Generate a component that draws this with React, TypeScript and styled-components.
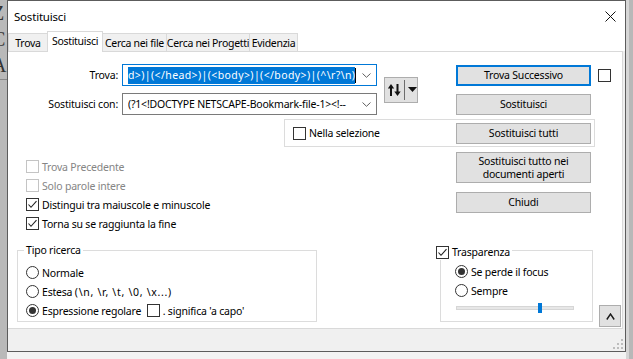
import React from "react";
import styled, { createGlobalStyle } from "styled-components";

const FONT = `"Noto Sans", "Liberation Sans", Arial, sans-serif`;

const Global = createGlobalStyle`
  html, body { margin: 0; padding: 0; background: #f2f2f2; }
  body { font-family: ${FONT}; font-size: 10.5px; letter-spacing: -0.2px; color: #000; }
  * { box-sizing: border-box; }
  button { font-family: ${FONT}; font-size: 10.5px; letter-spacing: -0.2px; color: #000; }
`;

const Screen = styled.div`
  width: 633px;
  height: 359px;
  overflow: hidden;
  display: grid;
  grid-template-columns: 7px 619px 7px;
  grid-template-rows: 352px 7px;
  background: #f3f3f3;
`;

const LeftStrip = styled.div`
  grid-column: 1;
  grid-row: 1 / 3;
  background: #b9b9b9;
  overflow: hidden;
  display: flex;
  flex-direction: column;
  font-family: "Liberation Serif", serif;
  font-size: 20px;
  line-height: 26px;
  color: #333;
`;

const Glyph = styled.span`
  margin-left: -8px;
  white-space: nowrap;
`;

const StripRule = styled.div`
  margin-top: 1px;
  height: 1px;
  background: #f4f4f4;
  border-bottom: 1px solid #888;
`;

const RightStrip = styled.div`
  grid-column: 3;
  grid-row: 1 / 3;
  background: linear-gradient(to right, #d6d6d6 0 3px, #b8b8b8 3px);
`;

const BottomStrip = styled.div`
  grid-column: 2;
  grid-row: 2;
  background: #f3f3f3;
`;

const Dialog = styled.div`
  grid-column: 2;
  grid-row: 1;
  border: 1px solid #5c5c5c;
  background: #fff;
  display: flex;
  flex-direction: column;
`;

const TitleBar = styled.div`
  height: 30px;
  flex: none;
  display: flex;
  align-items: center;
  justify-content: space-between;
  padding: 0 9px 0 6px;
  font-size: 11.5px;
`;

const Main = styled.div`
  display: flex;
  flex-direction: column;
  background: #f0f0f0;
`;

const TabRow = styled.div`
  height: 20px;
  display: flex;
  align-items: flex-end;
  background: #fff;
  position: relative;
  z-index: 1;
`;

const Tab = styled.div<{ $active?: boolean; $w: number }>`
  width: ${(p) => p.$w}px;
  height: ${(p) => (p.$active ? 21 : 18)}px;
  margin-right: -1px;
  margin-bottom: ${(p) => (p.$active ? -1 : 0)}px;
  padding-bottom: ${(p) => (p.$active ? 3 : 0)}px;
  background: ${(p) => (p.$active ? "#fff" : "#f0f0f0")};
  border: 1px solid #d9d9d9;
  border-bottom: none;
  display: flex;
  align-items: center;
  justify-content: center;
  white-space: nowrap;
  overflow: hidden;
  letter-spacing: -0.3px;
  position: relative;
  z-index: ${(p) => (p.$active ? 2 : 1)};
`;

const Panel = styled.div`
  width: 615px;
  height: 278px;
  background: #fff;
  border-top: 1px solid #d9d9d9;
  border-right: 1px solid #d9d9d9;
  border-bottom: 1px solid #d9d9d9;
  display: flex;
  flex-direction: column;
`;

const Footer = styled.div`
  height: 22px;
  background: #f0f0f0;
  display: flex;
  justify-content: flex-end;
  align-items: flex-end;
  padding: 0 2px 2px 0;
`;

const TopGrid = styled.div`
  margin-top: 12px;
  display: grid;
  grid-template-columns: 114px 255px 7px 34px 38px 135px 7px 13px;
  grid-template-rows: 22px 7px 22px 4px 28px;
`;

const FieldLabel = styled.label<{ $row: number }>`
  grid-column: 1;
  grid-row: ${(p) => p.$row};
  align-self: center;
  text-align: right;
  padding-right: 4px;
  white-space: nowrap;
`;

const Combo = styled.div<{ $row: number; $focus?: boolean }>`
  grid-column: 2;
  grid-row: ${(p) => p.$row};
  height: 22px;
  border: 1px solid ${(p) => (p.$focus ? "#0078d7" : "#7a7a7a")};
  display: flex;
  align-items: center;
  padding: 0 5px;
  gap: 4px;
  background: #fff;
`;

const ComboText = styled.div`
  flex: 1;
  overflow: hidden;
  white-space: nowrap;
  display: flex;
  align-items: center;
`;

const Selected = styled.span`
  background: #0078d7;
  color: #fff;
  line-height: 17px;
  letter-spacing: 0.4px;
`;

const Caret = styled.span`
  width: 1px;
  height: 15px;
  background: #000;
`;

const Escapes = styled.span`
  letter-spacing: 0.7px;
`;

const SwapButton = styled.button`
  grid-column: 4;
  grid-row: 1 / 4;
  align-self: center;
  height: 26px;
  padding: 0 0 0 3px;
  background: #e1e1e1;
  border: 1px solid #adadad;
  display: flex;
  align-items: center;
  gap: 3px;
`;

const SwapSep = styled.span`
  width: 1px;
  height: 20px;
  background: #6d6d6d;
`;

const Button = styled.button<{ $default?: boolean; $tall?: boolean }>`
  width: 135px;
  height: ${(p) => (p.$tall ? 31 : 21)}px;
  padding: 0;
  background: #e1e1e1;
  border: ${(p) => (p.$default ? "2px solid #0078d7" : "1px solid #adadad")};
  line-height: 13px;
  text-align: center;
`;

const GridButton = styled(Button)<{ $row: string }>`
  grid-column: 6;
  grid-row: ${(p) => p.$row};
  align-self: end;
`;

const GridCheck = styled.span`
  grid-column: 8;
  grid-row: 1;
  align-self: center;
  display: flex;
`;

const SelectionBox = styled.div`
  grid-column: 2 / 9;
  grid-row: 5;
  margin-left: 162px;
  width: 311px;
  border: 1px solid #dcdcdc;
  display: flex;
  align-items: center;
  justify-content: space-between;
  padding: 0 3px 0 8px;
`;

const Middle = styled.div`
  height: 90px;
  display: flex;
  justify-content: space-between;
  align-items: flex-start;
`;

const CheckList = styled.div`
  margin: 10px 0 0 18px;
  display: flex;
  flex-direction: column;
`;

const ButtonCol = styled.div`
  margin: 5px 31px 0 0;
  display: flex;
  flex-direction: column;
  gap: 9px;
`;

const Item = styled.label<{ $disabled?: boolean }>`
  height: 19px;
  display: flex;
  align-items: center;
  gap: 3px;
  white-space: nowrap;
  color: ${(p) => (p.$disabled ? "#858585" : "#000")};
`;

const Box = styled.span<{ $disabled?: boolean }>`
  width: 13px;
  height: 13px;
  flex: none;
  border: 1px solid ${(p) => (p.$disabled ? "#c4c4c4" : "#333")};
  background: #fff;
  display: inline-flex;
  align-items: center;
  justify-content: center;
`;

const RadioCircle = styled.span<{ $on?: boolean }>`
  width: 13px;
  height: 13px;
  flex: none;
  border: 1px solid #333;
  border-radius: 50%;
  background: #fff;
  display: inline-flex;
  align-items: center;
  justify-content: center;
  &::after {
    content: "";
    width: 7px;
    height: 7px;
    border-radius: 50%;
    background: ${(p) => (p.$on ? "#333" : "transparent")};
  }
`;

const Bottom = styled.div`
  margin-top: 13px;
  padding-left: 9px;
  display: flex;
  align-items: flex-start;
`;

const GroupBox = styled.div<{ $w: number; $ml?: number; $pad: string }>`
  position: relative;
  width: ${(p) => p.$w}px;
  height: 72px;
  margin-left: ${(p) => p.$ml ?? 0}px;
  border: 1px solid #dcdcdc;
  padding: ${(p) => p.$pad};
  display: flex;
  flex-direction: column;
`;

const Caption = styled.div<{ $left: number; $top: number }>`
  position: absolute;
  left: ${(p) => p.$left}px;
  top: ${(p) => p.$top}px;
  background: #fff;
  padding: 0 2px;
  line-height: 15px;
  display: flex;
  align-items: center;
  gap: 3px;
  white-space: nowrap;
`;

const Slider = styled.div`
  position: relative;
  margin: 3px 0 0 1px;
  width: 118px;
  height: 10px;
`;

const Track = styled.div`
  margin-top: 3px;
  height: 4px;
  background: #e7e7e7;
  border: 1px solid #d6d6d6;
`;

const Thumb = styled.div<{ $left: number }>`
  position: absolute;
  top: 0;
  left: ${(p) => p.$left}px;
  width: 4px;
  height: 10px;
  background: #0078d7;
`;

const CornerButton = styled.button`
  width: 22px;
  height: 22px;
  margin: 55px 0 0 6px;
  padding: 0;
  background: #e1e1e1;
  border: 1px solid #adadad;
  display: flex;
  align-items: center;
  justify-content: center;
`;

const CheckMark = () => (
  <svg width="11" height="11" viewBox="0 0 11 11">
    <polyline points="1.5,5.5 4,8.3 9.5,2.2" fill="none" stroke="#222" strokeWidth="1.1" />
  </svg>
);

const Check = ({ on, disabled }: { on?: boolean; disabled?: boolean }) => (
  <Box $disabled={disabled}>{on && <CheckMark />}</Box>
);

const Chevron = () => (
  <svg width="9" height="5" viewBox="0 0 9 5">
    <polyline points="0.5,0.5 4.5,4.3 8.5,0.5" fill="none" stroke="#606060" strokeWidth="1" />
  </svg>
);

const CloseIcon = () => (
  <svg width="11" height="11" viewBox="0 0 11 11">
    <path d="M0.5 0.5 L10.5 10.5 M10.5 0.5 L0.5 10.5" stroke="#111" strokeWidth="1" />
  </svg>
);

const SwapIcon = () => (
  <svg width="13" height="12" viewBox="0 0 13 12">
    <rect x="2" y="3" width="2" height="9" fill="#111" />
    <polygon points="-0.2,4.5 3,0 6.2,4.5" fill="#111" />
    <rect x="8.5" y="0" width="2" height="9" fill="#111" />
    <polygon points="6.3,7.5 9.5,12 12.7,7.5" fill="#111" />
  </svg>
);

const DownTriangle = () => (
  <svg width="9" height="5" viewBox="0 0 9 5">
    <polygon points="0,0 9,0 4.5,5" fill="#111" />
  </svg>
);

const UpChevron = () => (
  <svg width="9" height="7" viewBox="0 0 9 7">
    <polyline points="0.8,6.5 4.5,1 8.2,6.5" fill="none" stroke="#1a1a1a" strokeWidth="1.4" />
  </svg>
);

const Grip = () => (
  <svg width="10" height="10" viewBox="0 0 10 10">
    {[
      [8, 0],
      [4, 4],
      [8, 4],
      [0, 8],
      [4, 8],
      [8, 8],
    ].map(([x, y]) => (
      <rect key={`${x}-${y}`} x={x} y={y} width="2" height="2" fill="#bdbdbd" />
    ))}
  </svg>
);

const tabs = [
  { label: "Trova", w: 40 },
  { label: "Sostituisci", w: 56, active: true },
  { label: "Cerca nei file", w: 65 },
  { label: "Cerca nei Progetti", w: 84 },
  { label: "Evidenzia", w: 49 },
];

const options = [
  { label: "Trova Precedente", disabled: true },
  { label: "Solo parole intere", disabled: true },
  { label: "Distingui tra maiuscole e minuscole", on: true },
  { label: "Torna su se raggiunta la fine", on: true },
];

export default function App() {
  return (
    <>
      <Global />
      <Screen>
        <LeftStrip>
          <Glyph>Z</Glyph>
          <Glyph>C</Glyph>
          <Glyph>A</Glyph>
          <StripRule />
        </LeftStrip>
        <Dialog>
          <TitleBar>
            <span>Sostituisci</span>
            <CloseIcon />
          </TitleBar>
          <Main>
            <TabRow>
              {tabs.map((t) => (
                <Tab key={t.label} $w={t.w} $active={t.active}>
                  {t.label}
                </Tab>
              ))}
            </TabRow>
            <Panel>
              <TopGrid>
                <FieldLabel $row={1}>Trova:</FieldLabel>
                <Combo $row={1} $focus>
                  <ComboText>
                    <Selected>{"d>)|(</head>)|(<body>)|(</body>)|(^\\r?\\n)"}</Selected>
                    <Caret />
                  </ComboText>
                  <Chevron />
                </Combo>
                <FieldLabel $row={3}>Sostituisci con:</FieldLabel>
                <Combo $row={3}>
                  <ComboText>{"(?1<!DOCTYPE NETSCAPE-Bookmark-file-1><!--"}</ComboText>
                  <Chevron />
                </Combo>
                <SwapButton>
                  <SwapIcon />
                  <SwapSep />
                  <DownTriangle />
                </SwapButton>
                <GridButton $row="1" $default>
                  Trova Successivo
                </GridButton>
                <GridCheck>
                  <Check />
                </GridCheck>
                <GridButton $row="3">Sostituisci</GridButton>
                <SelectionBox>
                  <Item>
                    <Check />
                    Nella selezione
                  </Item>
                  <Button>Sostituisci tutti</Button>
                </SelectionBox>
              </TopGrid>
              <Middle>
                <CheckList>
                  {options.map((o) => (
                    <Item key={o.label} $disabled={o.disabled}>
                      <Check on={o.on} disabled={o.disabled} />
                      {o.label}
                    </Item>
                  ))}
                </CheckList>
                <ButtonCol>
                  <Button $tall>
                    Sostituisci tutto nei
                    <br />
                    documenti aperti
                  </Button>
                  <Button>Chiudi</Button>
                </ButtonCol>
              </Middle>
              <Bottom>
                <GroupBox $w={300} $pad="12px 0 0 8px">
                  <Caption $left={6} $top={-8}>
                    Tipo ricerca
                  </Caption>
                  <Item>
                    <RadioCircle />
                    Normale
                  </Item>
                  <Item>
                    <RadioCircle />
                    <span>
                      Estesa <Escapes>{"(\\n, \\r, \\t, \\0, \\x...)"}</Escapes>
                    </span>
                  </Item>
                  <Item>
                    <RadioCircle $on />
                    Espressione regolare&nbsp;
                    <Check />
                    {". significa 'a capo'"}
                  </Item>
                </GroupBox>
                <GroupBox $w={153} $ml={123} $pad="11px 0 0 14px">
                  <Caption $left={-7} $top={-6}>
                    <Check on />
                    Trasparenza
                  </Caption>
                  <Item>
                    <RadioCircle $on />
                    Se perde il focus
                  </Item>
                  <Item>
                    <RadioCircle />
                    Sempre
                  </Item>
                  <Slider>
                    <Track />
                    <Thumb $left={82} />
                  </Slider>
                </GroupBox>
                <CornerButton>
                  <UpChevron />
                </CornerButton>
              </Bottom>
            </Panel>
            <Footer>
              <Grip />
            </Footer>
          </Main>
        </Dialog>
        <RightStrip />
        <BottomStrip />
      </Screen>
    </>
  );
}
